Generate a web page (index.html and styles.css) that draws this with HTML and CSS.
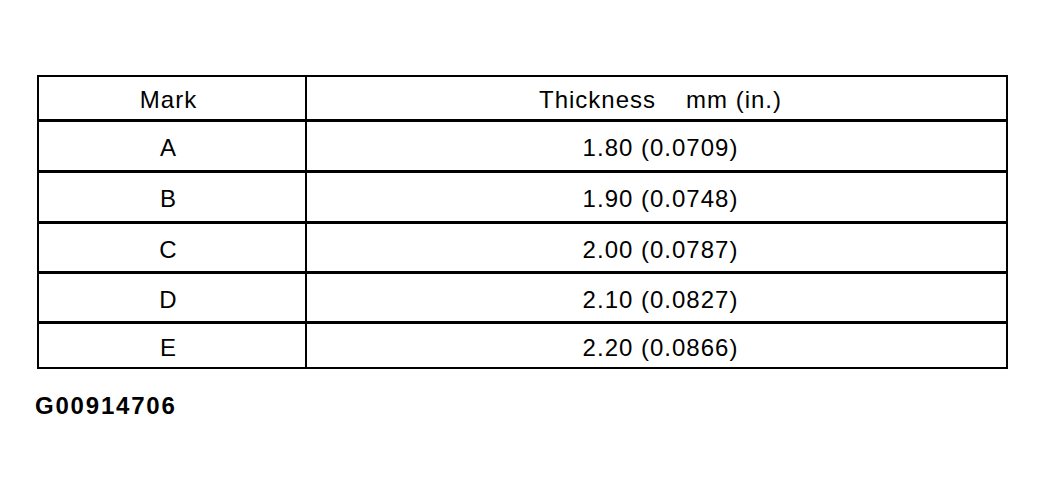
FILE: index.html
```html
<!DOCTYPE html>
<html lang="en">
<head>
<meta charset="utf-8">
<title>Thickness table</title>
<link rel="stylesheet" href="styles.css">
</head>
<body>
<div class="page">
  <div class="table">
    <div class="row head">
      <div class="cell">Mark</div>
      <div class="cell">Thickness<span class="gap"></span>mm (in.)</div>
    </div>
    <div class="row">
      <div class="cell">A</div>
      <div class="cell">1.80 (0.0709)</div>
    </div>
    <div class="row">
      <div class="cell">B</div>
      <div class="cell">1.90 (0.0748)</div>
    </div>
    <div class="row">
      <div class="cell">C</div>
      <div class="cell">2.00 (0.0787)</div>
    </div>
    <div class="row">
      <div class="cell">D</div>
      <div class="cell">2.10 (0.0827)</div>
    </div>
    <div class="row">
      <div class="cell">E</div>
      <div class="cell">2.20 (0.0866)</div>
    </div>
  </div>
  <div class="caption">G00914706</div>
</div>
</body>
</html>
```
FILE: styles.css
```css
html, body {
  margin: 0;
  background: #fff;
  color: #000;
  font-family: "Liberation Sans", Arial, sans-serif;
}
.page {
  padding: 75px 0 0 35px;
}
.table {
  margin-left: 2px;
  width: 971px;
  box-sizing: border-box;
  border: 2px solid #000;
}
.row {
  display: grid;
  grid-template-columns: 266px 1fr;
  border-top: 3px solid #000;
  height: 48px;
}
.row.head {
  border-top: 0;
  height: 42px;
}
.row:nth-child(4),
.row:nth-child(5) {
  height: 47px;
}
.row:nth-child(6) {
  height: 43px;
}
.cell {
  display: flex;
  align-items: center;
  justify-content: center;
  padding: 4px 7px 0 0;
  box-sizing: border-box;
  font-size: 24px;
  line-height: 1;
  letter-spacing: 1px;
}
.cell + .cell {
  border-left: 2px solid #000;
  padding: 4px 0 0 8px;
}
.gap {
  display: inline-block;
  width: 30px;
}
.caption {
  margin-top: 25px;
  font-size: 24px;
  line-height: 24px;
  font-weight: bold;
  letter-spacing: 1.8px;
}
```
